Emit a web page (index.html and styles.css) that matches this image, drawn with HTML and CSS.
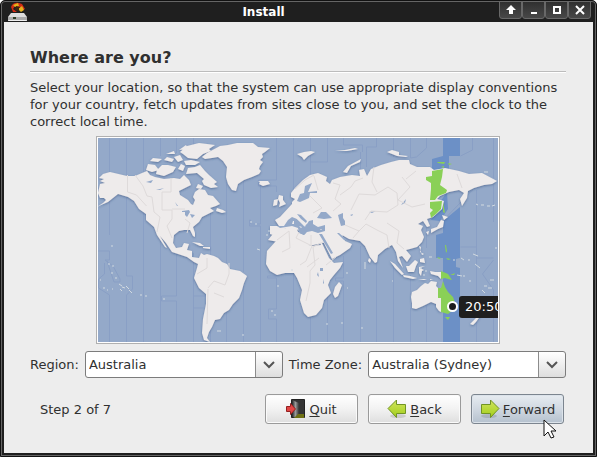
FILE: index.html
```html
<!DOCTYPE html>
<html lang="en">
<head>
<meta charset="utf-8">
<title>Install</title>
<link rel="stylesheet" href="styles.css">
</head>
<body>
<div class="window">
  <header class="titlebar">
    <svg class="app-icon" width="20" height="20" viewBox="0 0 20 20" aria-hidden="true">
      <path d="M3 11h13l3 4v4H0v-4z" fill="#ddd"/><path d="M0 15h19v3H0z" fill="#aaa"/><path d="M1 18h17v1H1z" fill="#eee"/><path d="M5 15h3v2H5z" fill="#2f3b25"/>
      <path d="M3 5q2-5 8-4l3 1 3 5-4 2-1-4-5-1-2 3 4 3H5z" fill="#d32b13"/><path d="M5 3l5-2 1 3-4 1zM10 7l4-3 2 4-3 2z" fill="#e5b21c"/><path d="M8 4l3 1v4l-4-1z" fill="#3d2410"/>
    </svg>
    <span class="title">Install</span>
    <div class="controls">
      <button aria-label="Shade"><svg width="12" height="12" viewBox="0 0 12 12"><path d="M6 1l5 5H8v4H4V6H1z" fill="#fff"/></svg></button>
      <button aria-label="Minimize"><svg width="12" height="12" viewBox="0 0 12 12"><path d="M3 8h6v2H3z" fill="#fff"/></svg></button>
      <button aria-label="Maximize"><svg width="12" height="12" viewBox="0 0 12 12"><path d="M2 2h8v8H2zM4 4v4h4V4z" fill="#fff" fill-rule="evenodd"/></svg></button>
      <button aria-label="Close"><svg width="12" height="12" viewBox="0 0 12 12"><path d="M2 2l8 8M10 2l-8 8" stroke="#fff" stroke-width="2"/></svg></button>
    </div>
  </header>
  <main class="content">
    <h1>Where are you?</h1>
    <p class="intro">Select your location, so that the system can use appropriate display conventions for your country, fetch updates from sites close to you, and set the clock to the correct local time.</p>
    <div class="map">
      <svg viewBox="98 138 400 204" role="img" aria-label="World time zone map">
        <defs>
          <filter id="shade" x="-5%" y="-5%" width="110%" height="110%"><feDropShadow dx="0" dy="1" stdDeviation="1" flood-color="#33507f" flood-opacity=".6"/></filter>
        </defs>
        <path fill="#94a9c9" d="M98 138h400v204H98z"/>
        <path class="zone" d="M443 138h17v18h-11v13l-17 1v-11l11-3zM447 192l1 17-8 12-9-1 9-18zM460 207v51l-4 1v8l4 1v74h-17v-84h-7v-23l7-2v-12z"/>
        <path class="meridian" d="M109.500 138v39M109.500 200v35M98 251h11.500v9h-4.500l8 6 7 13v3h-6l-7-21M104.500 263v11l-6 5v9l11 7v47M126.500 138v37M126.500 192v84h6v13l-6 6v47M143.500 138v35M143.500 205v137M160.500 138v18M160.500 233v109M176.500 138v15M176.500 247v49h-15v5h15v41M193.500 138v10M193.500 253v43h15M193.500 296v12h10M193.500 308v34M210.500 212v44M210.500 315v27M226.500 182v82M226.500 308v34M243.500 181v91M243.500 283v59M260.500 182v42h-10v-4h-1v6h11v51M260.500 277v65M276.500 138v42h-18v6h18v6M276.500 261v15h-9v2h9v31h-8v10h8v23M293.500 138v55M293.500 266v76M310.500 138v37M310.500 307v35M327.500 138v24h-17M327.500 291v51M343.500 138v7h19v7M343.500 256v22h-8v3h8v61M360.500 152v17M360.500 246v96M376.500 138v9h-10v20M376.500 253v89M393.500 138v19M393.500 265v77M410.500 138v20l6-1 10-9v-10M410.500 275v20M410.500 308v34M426.500 218v30M426.500 305v37M460.500 156l12-6v-12M472.500 190l-26 27M476.500 190v57M460.500 247h16v11h17M476.500 258v84M493.500 138v40M493.500 184v38M493.500 260l-11 14 11 16v52"/>
        <g class="land" filter="url(#shade)">
          <path d="M100 184l5-1-5-2 4-2-5-1 4-4 7-2 17 4 8 0 7-3 5-2 3 4 5 2 9 2 10-1 6 1 4-4 5 5 2 5-8 4-4 2 1 4 8 5 3 4 2 1 2-5-2-3 2-5 4-3 6 1 3 5 5 1 7 8-4 2-6 2 4 3-6 3-6 3-3 5-6 5 2 6v4l-2-1-3-6-6 0-5 1-5 4-1 8 3 5 6-1 2-4 5 1-2 6 5 1v6l7 1 2-5 3 2 3-1 7 2 4 2 4 4 5 2 3 5 10 2 7 5-3 7-2 7-3 8-6 6-4 6-5 3-4 6-5 1-3 7-3 5-2 6 3 4-6-2-2-7 1-14 3-15 0-10-7-6-5-10 3-10 1-4-4-2-7-5-6-2-9-3-6-9-6-7 7 12-2-1-8-12-3-8-8-7v-6l-7-5-5-8-6-4-10-3-5 4-5 4-7 3-4 2 6-4 3-3-2-2-4 0-2-5z"/>
          <path d="M205 159l-3-2 5-4 13-7 8-1 9-2 16 0 5 4 12 1-5 4-3 2 1 3-3 3 3 2-3 4-1 3 2 2-2 3-7 3-8 3-6 4-2 7-4-1-4-6-2-7 1-10-4-6-5-4-6 1z"/>
          <path d="M186 174l2-6 7-1 5-2 5 6 4 4 8 7-3 2 4 3-7 1-7-3-2-4 2-2-7-6zM180 152l7-6 12-3 16 2-6 4 2 2-8 3-6 5-9-1-5-4zM146 170l2-6 7 1 4 5-7 2zM157 170l5-5 6 0 8 2-3 5-9 4-8-2zM150 161l3-3 9 1-4 3zM164 160l3-3 7 2-2 3zM174 157l6-2 3 5-5 2zM184 161l7-1 9 2-5 3-9 0zM178 169l3-5 4 2-2 5zM198 184l5 2-2 3-5-1zM166 154l8-3 1 3zM179 150l7-5 2 4zM217 208l6 2 3 2-4 1-6-2zM258 181l4 0 6 0 2 3-7 2-4-2 1-2zM192 242l8 1 4 3-4 0zM203 247l7 0 0 2-7-1z"/>
          <path fill-rule="evenodd" d="M292 204l0-2 3-3-4-2 0-4 4-5 8-8 7-5 8-2 9 4-1 4 4 3 2-4 8-3 12-2 8 1-1-6 5-1 3 7 4-7 10-4 10-3 8-2 10 0 1 4 7 3 13 0 4 3 11-2 14 3 10 3 13-1 15 8-5 3-8 1-10 3-6 3-1 7-5 8-2-7 4-6-5-3-10 2-9 4-3 3 7 2-2 8-9 8-6 2 3 7-3 1-4-6-5 3 5 2-2 4 3 7-2 5-5 5-7 2-4 1 5 6-4 6-5-6-3 1 4 11-5-7-2-9-4-7-7 4-7 6-1 7-2 1-5-6-5-11-5-5-11-2-7-4 3 6 7 3-2 4-10 7-8 4-10-20-2 0 9 19 5 5 9-1-3 6-6 7-4 5-2 5 3 8-7 7-2 8-6 7-8 2-4-4-4-13 2-10-5-12-3-5-9 0-8 2-7-4-4-7 1-13 9-10 10-3 11 1 2 5 12 2 10-1-2-5-10-1-5-4 2-2-4-3 0 3-4-3-4-2 6 7-4 0-5-7-6 0-3 6-6 2-6-2 0-8 9 0-4-6 5-3z"/>
          <path d="M268 240l9-11 19-2 2 5 6 3 3-3 16 2 4 8-23 5zM323 222l15 3 5 12-8 4-11-9z"/>
          <path d="M279 195l4 1 0 4 3 4-7 3 1-4-2-4zM274 200l4-1-1 6-4 1zM339 282l3 3-4 11-3 2-2-4 2-7zM343 172l5-6 13-7-1 3-9 4-4 7zM297 154l7-2 7-1 4 1-7 4-4 4-2-3zM335 151l10-1 10-2 3 1-11 2zM387 152l5-2 7 2 0 3 9 1-2 1-9-1zM442 215l6 2-4 3zM441 220l3 1-1 6-5 2-7 4 0-4 6-2zM426 232l3-1-1 4zM411 297l1-5 5-2 4-4 4-3 3 1 3-3 6 1-1 4 2 2v10h3v14l-2-1-3-4 0-3-5-2-8 4-7 3-4-1 0-5zM390 261l5 3 9 10-2 1-7-7zM403 275l7 1 7 2-4 1-9-2zM406 266l3 0 6-6 3 2-2 4-2 6-6 0zM419 267l6-1-5 2 4 2-2 1-1 5-2-3zM430 271l5 1 6 0v7l-3-3-7-2zM419 246l2 1-1 5 4 2-2 1zM420 259l4-1 1 5-5-1zM473 325l-3-1 6-6 4-4 1 1-5 7zM369 258l2 2-1 3-2-2zM418 237l2 1-1 3zM409 246l2 0-1 2zM418 279l9 0-3 1zM430 279l3 0-3 1z"/>
        </g>
        <path fill="#94a9c9" d="M297 201l3-7 4-1 1-7 7-3-4 9 9-1 0 2-7 0-1 5-9 4zM317 218l4-6 5 0 2 2 4 4-8 1zM338 215l5-2 0 5 2 3 0 4-4 1-2-7zM350 215l3-1-1 2zM369 212l7-1-4 2zM401 205l5-6-1 4zM320 268l3 0 0 3-3 0zM318 272l1 5-2-2zM323 279l1 4-1 1zM146 182l7-2-2 3zM156 190l8-2-4 2zM175 202l3 4-1 0zM182 211l7-1 1 2-3 5-2-2 0-3-3 0zM190 214l5 1-3 3zM277 226l7 0 4-6 4-3 5 2 5 5 2 2 3-2 2-3 4-1 0 4 5 3 7-2 0 6-7 2-6-2-5 1-3 3-5-2-1-5-6-2-12 2zM297 214l4 1 6 6-1 2-5-4zM319 234l3 0 11 19-2 1zM337 233l2 0 8 7-3 0z"/>
        <path class="land" d="M296 217l3 1 7 6-1 3-3-4-5-4zM299 226l3 1-1 1zM293 221l1 0 0 3-2 0zM320 229l2 0-1 1z"/>
        <path class="border" d="M127.500 175v17l9 3 10 11M135 175l8 11 4 10 5 1M152 197l2 15 6 5-3 15M162 192v18h10v9l-5 7 5 12M171 178v14h-9M185 219l5 4-3 10M172 209h13M295 189l10-9 9-5M314 176l4 14M310 196l12 12-9 5M333 183l7 2-5 14 6 5-8 7M340 195l11-8 4-6 8-3M351 210l8-16 16 1 13-8 9 6 1 12-11 7-16-1-6 9M374 167l-2 15 5 10M402 177l8 10-12 13 14 7 13-3M416 171l-10 8M345 225l14 6 7-7 11 6M359 231l-6 7M377 230l10 5 2 13M387 223l12 8-2 12M397 243l7 6M277 240l12-9M289 231l1 17-8 4M299 232l-3 6 16 8-6 15-6 4M323 242l-10 5 2 18-5 6v12l-4 18M319 258l-12 9M326 265l10-8M311 235v11M457 174l5 14M207 258v10l-10 6M208 288l6-7 11 4 4-11v-11M208 289l-1 35M214 293l10 4"/>
        <g fill="#8ad057">
          <path d="M432 171l11-2-1 8-2 8 7 5-1 3-8 3-3 4h-5l1-11v-6l-5-3v-3l6-1zM430 202l12-1-1 8-5 5-5 4-1-5 3-3-3-2zM443 202l2 11-2-1zM437 162l8 0-1 2-6-1zM448 163l4 1-3 1zM441 167l3-1v2z"/>
          <path d="M438 288h3l2-7 2 6 3 5 5 5 2 6-2 7-5 4-7-2v-14h-3zM445 317h5l-2 3zM441 271l7 3 4 6-4-1-3-1-4 1zM450 275l5-2-1 2zM445 245l1 0 1 6-1 2zM437 257l4 1-2 1zM446 258l5 1-3 1z"/>
        </g>
        <path class="islands" d="M111 246h2M108 264h2M112 266h2M115 278h2M111 273h2M100 280h1M103 288h2M107 290h1M112 289h1M119 284l3 2M122 287l3 1M126 286l3 3M129 290l3 3M120 289l2 2M140 295h2M145 296h2M163 299h2M217 331h4M242 335h2M250 222h2M255 224h2M268 231h2M266 235h2M257 249l3 1M292 269v2M277 286h2M271 311h2M274 315h2M326 324h2M341 323h2M361 328h2M347 288h1M346 273h2M365 262v7M392 281h1M453 260h2M461 258l3 2M468 260h2M457 275l5 1M463 276h2M469 281h2M473 254l5 2M475 264l5 4M484 286h3M482 290l3 3M490 280h4M488 288h4M495 248h2M420 268h2M425 271h2M423 275h2M476 204l2 1M481 205h3M487 206h3M492 206l3-1M484 172h4M429 257h3"/>
        <circle cx="452.500" cy="306.500" r="4.500" fill="#1c1c1c" stroke="#fff" stroke-width="2"/>
        <rect x="459" y="296" width="50" height="22" rx="3" fill="#1f1f1f"/>
        <text class="clock" x="465" y="311">20:50</text>
      </svg>
    </div>
    <form class="wizard">
      <div class="fields">
        <label for="region">Region:</label>
        <span class="combo"><select id="region"><option>Australia</option></select><svg class="chevron" width="12" height="8" viewBox="0 0 12 8" aria-hidden="true"><path d="M1 1l5 5 5-5" fill="none" stroke="#555" stroke-width="2"/></svg></span>
        <label for="zone">Time Zone:</label>
        <span class="combo"><select id="zone"><option>Australia (Sydney)</option></select><svg class="chevron" width="12" height="8" viewBox="0 0 12 8" aria-hidden="true"><path d="M1 1l5 5 5-5" fill="none" stroke="#555" stroke-width="2"/></svg></span>
      </div>
      <div class="actions">
        <span class="step">Step 2 of 7</span>
        <button type="button" class="action"><svg width="20" height="20" viewBox="0 0 20 20" aria-hidden="true"><defs><linearGradient id="door" x2="1"><stop stop-color="#222"/><stop offset=".5" stop-color="#999"/><stop offset="1" stop-color="#333"/></linearGradient></defs><path d="M5.500 .5h13v18h-13z" fill="#343434" stroke="#222"/><path d="M6 1l7 3v15l-7-1z" fill="url(#door)"/><path d="M12 15h6v4H8z" fill="#6e7013"/><path d="M.5 7.500h4v-3l5 5.500-5 5.500v-3h-4z" fill="#e14444" stroke="#932020"/></svg><span><u>Q</u>uit</span></button>
        <button type="button" class="action"><svg width="20" height="20" viewBox="0 0 20 20" aria-hidden="true"><defs><linearGradient id="leaf" x2="0" y2="1"><stop stop-color="#d0e45f"/><stop offset="1" stop-color="#a2ce19"/></linearGradient></defs><ellipse cx="11" cy="17" rx="8" ry="2" fill="#000" opacity=".12"/><path d="M1 9.500l8.500-8.500v4.500h9v9h-9v4z" fill="url(#leaf)" stroke="#719424"/></svg><span><u>B</u>ack</span></button>
        <button type="button" class="action hover"><svg width="20" height="20" viewBox="0 0 20 20" aria-hidden="true"><ellipse cx="9" cy="17" rx="8" ry="2" fill="#000" opacity=".12"/><path d="M19 9.500l-8.500-8.500v4.500h-9v9h9v4z" fill="url(#leaf)" stroke="#719424"/></svg><span><u>F</u>orward</span><svg class="pointer" width="13" height="21" viewBox="0 0 13 21" aria-hidden="true"><path d="M1 1v16l4-4 3 6 3-1-3-6h5z" fill="#fff" stroke="#111"/></svg></button>
      </div>
    </form>
  </main>
</div>
</body>
</html>
```

FILE: styles.css
```css
* { box-sizing: border-box; }
body {
  margin: 0;
  background: #fff;
  color: #303030;
  font: 13px/17px "DejaVu Sans", sans-serif;
}
button, select { font: inherit; color: inherit; }
.window {
  display: flex;
  flex-direction: column;
  min-height: 100vh;
  padding: 0 3px 3px;
  background: #1f1f1f;
  border: 1px solid #111;
  border-radius: 5px 5px 0 0;
  box-shadow: inset 0 0 0 1px #656565;
}
.titlebar {
  display: grid;
  grid-template-columns: 92px 1fr 92px;
  height: 21px;
  color: #fff;
}
.app-icon { margin: 1px 0 0 4px; }
.title {
  font-size: 12px;
  line-height: 22px;
  font-weight: bold;
  text-align: center;
  padding-right: 70px;
}
.controls {
  display: flex;
  height: 18px;
  margin-right: 2px;
  margin-left: -2px;
}
.controls button {
  flex: 1;
  display: grid;
  place-items: center;
  padding: 0;
  border: 1px solid #686868;
  border-radius: 0 0 3px 3px;
  background: linear-gradient(#303030, #484848);
}
.content {
  flex: 1;
  padding: 26px 27px 0 26px;
  background: #ededed;
}
h1 {
  margin: 0 0 7px;
  padding-bottom: 3px;
  border-bottom: 1px solid #bcbcbc;
  box-shadow: 0 1px #fff;
  font-size: 16px;
  line-height: 20px;
}
.intro { margin: 0 0 6px; }
.map {
  max-width: 404px;
  margin: 0 auto 7px;
  border: 1px solid #b0b0b0;
  padding: 1px;
  background: #fff;
}
.map svg {
  display: block;
  width: 100%;
  overflow: hidden;
}
.zone { fill: #6c90c6; }
.meridian { fill: none; stroke: #899fc5; stroke-width: 1; }
.land { fill: #eeebeb; }
.border { fill: none; stroke: #dedada; stroke-width: 1; }
.islands { stroke: #d2dae0; stroke-width: 1; }
.clock { fill: #fff; font-size: 13px; }
.fields {
  display: flex;
  align-items: center;
  gap: 6px;
}
.combo {
  position: relative;
  flex: 1;
}
.combo select {
  appearance: none;
  display: block;
  width: 100%;
  height: 27px;
  padding: 0 30px 0 3px;
  border: 1px solid #7c7c7c;
  border-radius: 3px;
  background:
    linear-gradient(#8c8c8c, #8c8c8c) right 26px top / 1px 100% no-repeat,
    linear-gradient(#fff, #dedede) right / 26px 100% no-repeat,
    #fff;
}
.chevron {
  position: absolute;
  right: 8px;
  top: 10px;
  pointer-events: none;
}
.actions {
  display: flex;
  align-items: center;
  gap: 10px;
  margin-top: 16px;
  padding: 0 2px 0 10px;
}
.step { flex: 1; }
.action {
  position: relative;
  display: flex;
  align-items: center;
  justify-content: center;
  gap: 3px;
  width: 93px;
  height: 30px;
  padding: 0;
  border: 1px solid #9a9a9a;
  border-radius: 3px;
  background: linear-gradient(#fff, #f2f2f2 50%, #dedede);
  box-shadow: inset 0 0 0 1px #fafafa;
}
.action u { text-underline-offset: 2px; }
.hover {
  border-color: #7c858f;
  background: linear-gradient(#e7ecf1, #d0d8e1 50%, #b5c1ce);
  box-shadow: inset 0 0 0 1px #dce3ea;
}
.pointer {
  position: absolute;
  right: 7px;
  top: 24px;
}
```
